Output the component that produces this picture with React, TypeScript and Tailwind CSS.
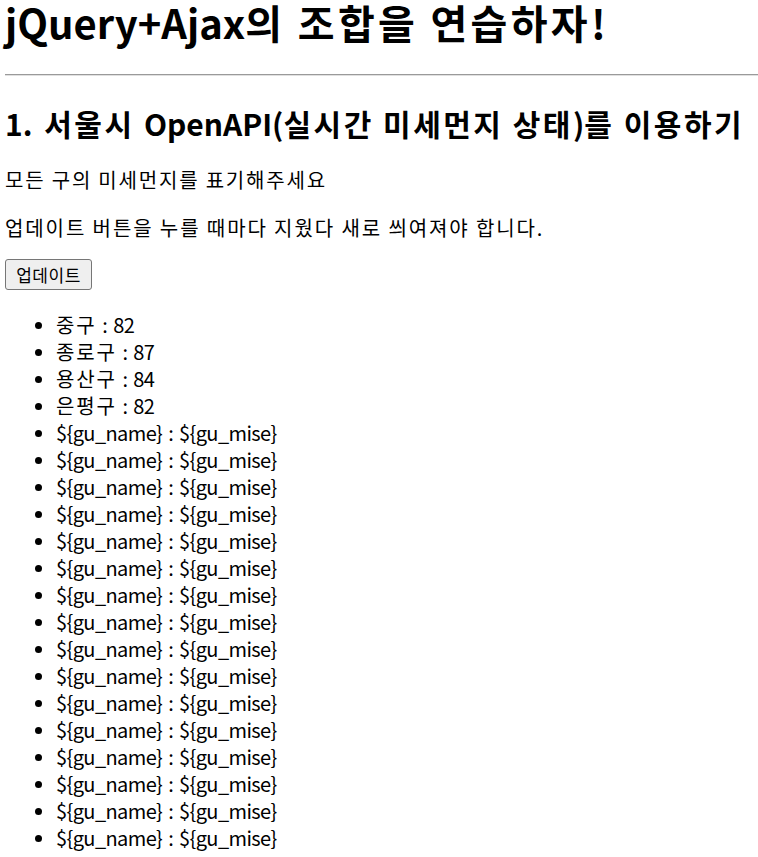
const districts = [
  { name: "중구", mise: "82" },
  { name: "종로구", mise: "87" },
  { name: "용산구", mise: "84" },
  { name: "은평구", mise: "82" },
]

const templateRows = Array.from({ length: 16 }, () => ({ name: "${gu_name}", mise: "${gu_mise}" }))

// Latin runs keep normal spacing, the hangul around them gets the wider Malgun-like spacing
function Spaced({ text }: { text: string }) {
  const parts = text.split(/([A-Za-z0-9+()]+)/)
  return (
    <>
      {parts.map((part, i) =>
        /^[A-Za-z0-9+()]+$/.test(part) ? (
          <span key={i} className="tracking-normal">
            {part}
          </span>
        ) : (
          <span key={i}>{part}</span>
        )
      )}
    </>
  )
}

export default function App() {
  const rows = [...districts, ...templateRows]

  return (
    <div
      className="min-h-screen bg-white pl-[5px] pt-px text-black"
      style={{ fontFamily: '"Noto Sans CJK KR", "Noto Sans", sans-serif' }}
    >
      <h1 className="-mt-[5px] text-[40px] font-bold leading-[52px] tracking-[3.3px]">
        <Spaced text="jQuery+Ajax의 조합을 연습하자!" />
      </h1>

      <div className="mt-[26px] h-[2px] border-t border-b border-t-[#9a9a9a] border-b-[#e0e0e0]" />

      <h2 className="mt-[24px] text-[30px] font-bold leading-[46px] tracking-[2.5px]">
        <Spaced text="1. 서울시 OpenAPI(실시간 미세먼지 상태)를 이용하기" />
      </h2>

      <p className="mt-[20px] text-[20px] leading-[27px] tracking-[1.8px]">모든 구의 미세먼지를 표기해주세요</p>
      <p className="mt-[21px] text-[20px] leading-[27px] tracking-[1.9px]">
        업데이트 버튼을 누를 때마다 지웠다 새로 씌여져야 합니다.
      </p>

      <button className="mt-[18px] h-[31px] w-[87px] rounded-[3px] border border-[#767676] bg-[#efefef] text-[17px] leading-none tracking-[0.5px]">
        업데이트
      </button>

      <ul className="mt-[21px] list-disc pl-[51px] text-[20px] leading-[27px] tracking-[-0.6px] [word-spacing:2px] marker:text-[18px]">
        {rows.map((row, i) => (
          <li key={i}>
            <span className={i < districts.length ? "tracking-[1.8px]" : ""}>{row.name}</span> : {row.mise}
          </li>
        ))}
      </ul>
    </div>
  )
}
